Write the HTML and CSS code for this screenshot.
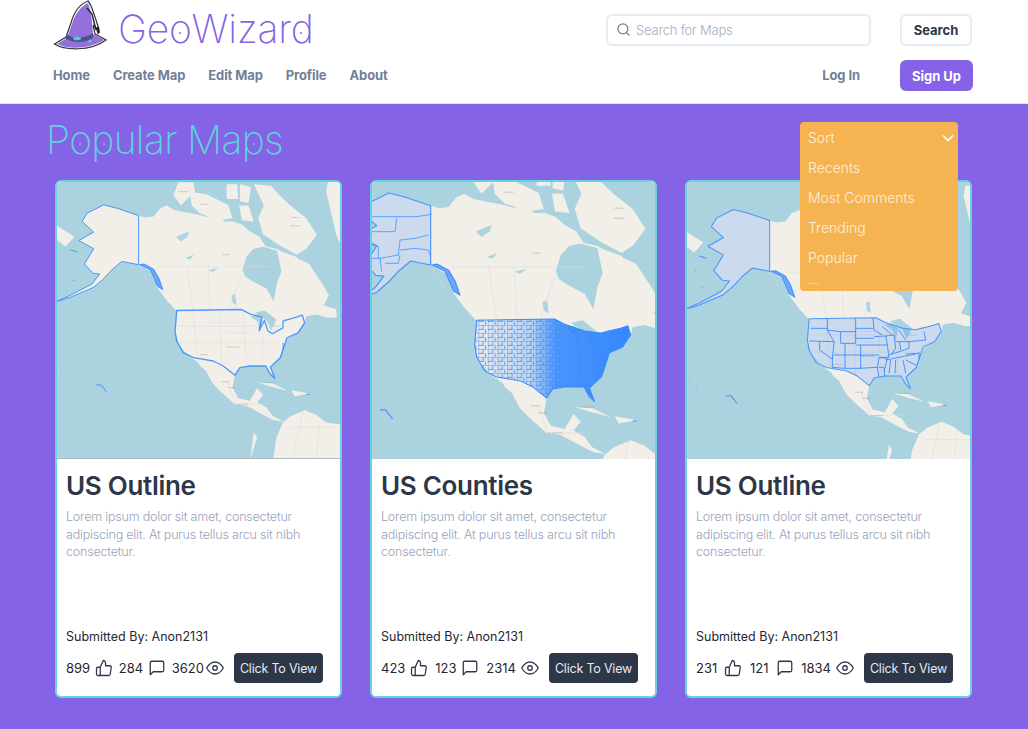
FILE: index.html
```html
<!DOCTYPE html>
<html lang="en">
<head>
<meta charset="utf-8">
<title>GeoWizard</title>
<link rel="stylesheet" href="styles.css">
</head>
<body>
<svg class="defs" width="0" height="0" aria-hidden="true">
  <defs>
    <g id="land">
      <path class="ground" d="M265 122 285 128 310 125 330 100 350 92 372 105 405 112 440 118 470 126 500 125 525 140 550 140 578 150 600 170 628 185 648 215 680 222 700 232 745 248 775 262 800 300 820 330 838 362 822 392 860 405 862 428 835 430 800 420 770 425 765 445 745 475 715 490 700 520 690 550 662 578 675 612 662 600 648 575 600 575 570 580 555 603 548 640 565 672 600 680 622 642 640 662 622 684 650 700 668 725 702 742 672 738 640 722 590 695 555 690 510 650 470 610 445 565 410 540 385 510 375 470 380 410 352 380 322 340 300 290 265 270 215 260 185 285 160 312 130 338 60 368 20 380 60 362 125 328 148 298 128 296 102 268 130 222 85 197 130 172 95 140 110 115 160 90 200 100Z"/>
      <path class="water" d="M578 285 590 245 612 222 640 216 682 228 695 290 682 325 672 380 650 342 612 322 585 305ZM445 570 480 632 500 650 468 590ZM740 240 800 265 790 272 745 252Z"/>
      <path class="water" d="M378 186 418 170 412 186 392 200ZM405 250 432 240 420 254ZM475 286 505 280 488 292ZM545 362 556 358 560 392 548 384ZM600 425 625 422 640 438 630 474 624 442ZM615 415 645 408 680 436 664 468 652 440Z"/>
      <path class="ground" d="M370 60 385 22 430 22 435 50 392 92ZM420 50 470 58 535 90 548 130 510 136 450 116 425 92ZM530 28 562 28 565 72 530 72ZM570 28 604 36 596 84 570 78ZM568 92 596 92 612 140 576 136ZM612 28 664 32 690 62 722 92 770 130 802 180 770 222 742 240 690 212 640 178 625 130 642 92ZM835 20 880 20 880 225 860 180 830 50ZM15 150 72 186 45 215 15 192ZM670 860 680 790 700 745 722 726 765 708 800 722 830 745 880 752 880 860ZM625 625 670 628 715 650 668 638ZM725 648 780 658 735 666ZM800 390 858 404 850 412 805 405ZM600 860 612 775 622 790Z"/>
      <path class="lines" d="M265 270 300 330M320 275H660M410 275 430 405M475 275 480 405M540 400 575 300M530 475H600M430 405 440 545M470 445H580M510 405 515 575M580 410 590 570M640 480 635 575M530 620 560 690M570 690H650M720 760H860M760 710 730 850M810 750 800 850M380 455H640M380 505H690"/>
      <path class="tiny" d="M385 50h30M450 88h24M725 128h24M723 153h26M520 240h20M530 518h38M450 541h24M705 435h14M670 455h22M515 622h22M535 640h24M560 690h36M640 625h34"/>
    </g>
    <path id="us" d="M380 408 575 405 600 418 636 428 628 468 644 438 655 470 668 478 700 460 700 440 740 428 758 422 765 445 745 475 712 490 702 520 692 550 662 578 675 612 662 600 648 575 600 575 570 580 555 603 520 575 490 560 430 550 400 535 380 500 375 470Z"/>
    <path id="us-solid" d="M380 408 575 405 600 418 650 435 690 440 740 428 758 422 765 445 745 475 712 490 702 520 692 550 662 578 675 612 662 600 648 575 600 575 570 580 555 603 520 575 490 560 430 550 400 535 380 500 375 470Z"/>
    <path id="ak" d="M95 140 110 115 160 90 200 100 265 122 265 270 215 260 185 285 160 312 130 338 60 368 20 380 60 362 125 328 148 298 128 296 102 268 130 222 85 197 130 172Z"/>
    <path id="pan" d="M268 270 300 285 322 335 338 345 326 310 310 283 282 268Z"/>
    <path id="isles" d="M60 225 80 232M48 268h3M70 316v3M30 590h2M50 605h2M138 632h14L170 655M700 505V525M770 660H780"/>
    <pattern id="county" width="24" height="20" patternUnits="userSpaceOnUse">
      <path class="county-cell" d="M0 0H24M0 0V20M12 0V11M0 11H14M18 11V20"/>
    </pattern>
    <linearGradient id="fade" x1="0" x2="1" y1="0" y2="0">
      <stop offset="0" stop-color="#3388ff" stop-opacity=".06"/>
      <stop offset=".35" stop-color="#3388ff" stop-opacity=".25"/>
      <stop offset=".52" stop-color="#3388ff" stop-opacity=".85"/>
      <stop offset="1" stop-color="#3388ff"/>
    </linearGradient>
  </defs>
</svg>

<header class="site-header">
  <div class="top-row">
    <a class="brand" href="#">
      <svg class="hat" viewBox="53 0 54 52">
        <path class="hat-edge" d="M88 1C80 4 74 12 71 23L66 37 54.500 44C64 50 90 52 106 40L95 34 93 25 97 30 98 33 99 29 94 14C92 8 90 3 88 1Z"/>
        <path class="hat-body" d="M88 3C81 6 75 14 72 24L67 38 57 44C67 49 88 50 104 40L93 34 92 22C91 14 90 8 88 3Z"/>
        <path class="hat-fold" d="M87 8 92 14 94 22 96 30" />
        <path class="hat-band" d="M66 34C73 39 85 39 93 33L93 38C85 43 74 43 66 39Z"/>
        <ellipse class="hat-gem" cx="77" cy="38.500" rx="4" ry="1.800"/>
        <circle class="hat-gem" cx="90" cy="41" r="1.600"/>
        <path class="hat-tassel" d="M97 27 99 33"/>
      </svg>
      <span class="wordmark">Ge<span class="dot">o</span>Wizar<span class="dot dot-d">d</span></span>
    </a>
    <div class="search-area">
      <label class="search-box">
        <svg class="search-icon" viewBox="0 0 24 24"><circle cx="11" cy="11" r="8"/><path d="M21 21l-4.300-4.300"/></svg>
        <span class="placeholder">Search for Maps</span>
      </label>
      <button class="btn btn-search">Search</button>
    </div>
  </div>
  <div class="nav-row">
    <nav class="nav">
      <a href="#">Home</a><a href="#">Create Map</a><a href="#">Edit Map</a><a href="#">Profile</a><a href="#">About</a>
    </nav>
    <div class="auth">
      <a class="login" href="#">Log In</a>
      <button class="btn btn-signup">Sign Up</button>
    </div>
  </div>
</header>

<main class="content">
  <h1 class="page-title">P<span class="dot">o</span><span class="dot dot-p">p</span>ular Ma<span class="dot dot-p">p</span>s</h1>

  <div class="sort-menu">
    <div class="sort-item sort-head">Sort
      <svg class="chevron" viewBox="0 0 12 8"><path d="M1 1.500 6 6.500 11 1.500"/></svg>
    </div>
    <div class="sort-item">Recents</div>
    <div class="sort-item">Most Comments</div>
    <div class="sort-item">Trending</div>
    <div class="sort-item">Popular</div>
    <div class="sort-more">....</div>
  </div>

  <section class="cards">
    <article class="card">
      <svg class="map map-rule" viewBox="21 21 849 831">
        <use href="#land"/>
        <use class="outline coast" href="#us"/>
        <use class="outline" href="#ak"/>
        <use class="outline dense" href="#pan"/>
        <use class="outline" href="#isles"/>
      </svg>
      <div class="card-body">
        <h2 class="card-title">US Outline</h2>
        <p class="card-text">Lorem ipsum dolor sit amet, consectetur adipiscing elit. At purus tellus arcu sit nibh consectetur.</p>
        <p class="submitted">Submitted By: Anon2131</p>
        <div class="card-foot">
          <div class="stats">
            <span class="stat">899 <svg class="icon" viewBox="0 0 24 24"><path d="M14 9V5a3 3 0 0 0-3-3l-4 9v11h11.280a2 2 0 0 0 2-1.700l1.380-9a2 2 0 0 0-2-2.300zM7 22H4a2 2 0 0 1-2-2v-7a2 2 0 0 1 2-2h3"/></svg></span>
            <span class="stat">284 <svg class="icon" viewBox="0 0 24 24"><path d="M21 15a2 2 0 0 1-2 2H7l-4 4V5a2 2 0 0 1 2-2h14a2 2 0 0 1 2 2z"/></svg></span>
            <span class="stat stat-tight">3620 <svg class="icon icon-eye" viewBox="0 0 24 24"><path d="M1 12s4-8 11-8 11 8 11 8-4 8-11 8-11-8-11-8z"/><circle cx="12" cy="12" r="3"/></svg></span>
          </div>
          <button class="btn-view">Click To View</button>
        </div>
      </div>
    </article>

    <article class="card">
      <svg class="map" viewBox="21 21 849 831">
        <g transform="translate(-121 -54) scale(1.2)">
          <use href="#land"/>
          <use class="county-fill" href="#us-solid"/>
          <use class="county-fade" href="#us-solid"/>
          <use class="outline filled" href="#ak"/>
          <use class="outline dense" href="#pan"/>
          <use class="outline" href="#isles"/>
        </g>
        <path class="outline thin" d="M20 125H155L200 118M20 170H90L95 130M20 210 40 215 40 250M45 250 100 240 105 195 150 190 190 180M105 225 150 220 190 225 197 245M20 250H45M45 250 50 290M60 265H100M100 265 105 240"/>
      </svg>
      <div class="card-body">
        <h2 class="card-title">US Counties</h2>
        <p class="card-text">Lorem ipsum dolor sit amet, consectetur adipiscing elit. At purus tellus arcu sit nibh consectetur.</p>
        <p class="submitted">Submitted By: Anon2131</p>
        <div class="card-foot">
          <div class="stats">
            <span class="stat">423 <svg class="icon" viewBox="0 0 24 24"><path d="M14 9V5a3 3 0 0 0-3-3l-4 9v11h11.280a2 2 0 0 0 2-1.700l1.380-9a2 2 0 0 0-2-2.300zM7 22H4a2 2 0 0 1-2-2v-7a2 2 0 0 1 2-2h3"/></svg></span>
            <span class="stat">123 <svg class="icon" viewBox="0 0 24 24"><path d="M21 15a2 2 0 0 1-2 2H7l-4 4V5a2 2 0 0 1 2-2h14a2 2 0 0 1 2 2z"/></svg></span>
            <span class="stat">2314 <svg class="icon icon-eye" viewBox="0 0 24 24"><path d="M1 12s4-8 11-8 11 8 11 8-4 8-11 8-11-8-11-8z"/><circle cx="12" cy="12" r="3"/></svg></span>
          </div>
          <button class="btn-view">Click To View</button>
        </div>
      </div>
    </article>

    <article class="card">
      <svg class="map" viewBox="21 21 849 831">
        <g transform="translate(-4 11) scale(1.03)">
          <use href="#land"/>
          <use class="outline filled" href="#us-solid"/>
          <use class="outline filled" href="#ak"/>
          <use class="outline dense" href="#pan"/>
          <use class="outline" href="#isles"/>
        </g>
        <path class="outline" transform="translate(-3 315)" d="M395 145H445M392 183 465 185M445 115V150L465 185V190M445 150 485 155H530M530 115V190M530 145H582M530 175H585M485 155V190H530M422 185V210L460 238 465 190M465 225H498M498 190V265M498 225H545M545 195V265M530 195H585M545 225H600M600 232 595 265M460 225V262L498 265 540 265 595 262 600 290M582 115 585 150 610 165M585 170 620 168 625 195M585 195H625L630 232H600M600 232 625 235 615 275M600 262H615L618 290M635 240 630 280M650 240 648 280M672 240 680 280M620 240 710 222M630 225 690 205M620 168 645 165 650 205 635 225M650 185H662L665 210M662 185H690V205M690 185 740 180M680 222 720 220M680 240 710 255M735 155 740 180M610 140 640 165M660 150 680 180"/>
      </svg>
      <div class="card-body">
        <h2 class="card-title">US Outline</h2>
        <p class="card-text">Lorem ipsum dolor sit amet, consectetur adipiscing elit. At purus tellus arcu sit nibh consectetur.</p>
        <p class="submitted">Submitted By: Anon2131</p>
        <div class="card-foot">
          <div class="stats">
            <span class="stat stat-wide">231 <svg class="icon" viewBox="0 0 24 24"><path d="M14 9V5a3 3 0 0 0-3-3l-4 9v11h11.280a2 2 0 0 0 2-1.700l1.380-9a2 2 0 0 0-2-2.300zM7 22H4a2 2 0 0 1-2-2v-7a2 2 0 0 1 2-2h3"/></svg></span>
            <span class="stat stat-wide">121 <svg class="icon" viewBox="0 0 24 24"><path d="M21 15a2 2 0 0 1-2 2H7l-4 4V5a2 2 0 0 1 2-2h14a2 2 0 0 1 2 2z"/></svg></span>
            <span class="stat">1834 <svg class="icon icon-eye" viewBox="0 0 24 24"><path d="M1 12s4-8 11-8 11 8 11 8-4 8-11 8-11-8-11-8z"/><circle cx="12" cy="12" r="3"/></svg></span>
          </div>
          <button class="btn-view">Click To View</button>
        </div>
      </div>
    </article>
  </section>
</main>
</body>
</html>
```
FILE: styles.css
```css
* { box-sizing: border-box; }
html, body { margin: 0; height: 100%; }
body {
  display: flex;
  flex-direction: column;
  font-family: Inter, "Liberation Sans", sans-serif;
  background: #8463e6;
  color: #2d3748;
  overflow: hidden;
}
a { text-decoration: none; color: inherit; }
.defs { position: absolute; }

/* header */
.site-header {
  height: 104px;
  flex: none;
  background: #fff;
  padding: 0 56px 0 53px;
  border-bottom: 1px solid #e4dcfa;
}
.top-row { display: flex; justify-content: space-between; height: 60px; }
.brand { display: flex; align-items: flex-start; gap: 11px; }
.hat { width: 54px; height: 52px; }
.hat-edge { fill: #fff; stroke: #333; stroke-width: 1.200; }
.hat-body { fill: #9370dc; }
.hat-fold { fill: none; stroke: #2a2438; stroke-width: 1.500; }
.hat-band { fill: #50508c; }
.hat-gem { fill: #45d3d8; }
.hat-tassel { stroke: #222; stroke-width: 2.500; }
.wordmark {
  font-size: 39px;
  font-weight: 200;
  line-height: 58px;
  color: #8463e6;
  letter-spacing: -.2px;
}
.dot { position: relative; }
.dot::after {
  content: "";
  position: absolute;
  left: 50%;
  top: 58%;
  width: 2px;
  height: 2px;
  margin-left: -1px;
  border-radius: 50%;
  background: currentColor;
}
.dot-d::after { left: 43%; }
.dot-p::after { left: 55%; }
.search-area { display: flex; gap: 29px; padding-top: 14px; height: 46px; }
.search-box {
  width: 265px;
  height: 32px;
  display: flex;
  align-items: center;
  gap: 5px;
  padding: 0 8px 1px;
  border: 2px solid #e8ebf2;
  border-radius: 6px;
}
.search-icon { width: 15px; height: 15px; fill: none; stroke: #718096; stroke-width: 2; stroke-linecap: round; }
.placeholder { font-size: 13px; font-weight: 300; color: #a0aec0; letter-spacing: -.2px; }
.btn { font-family: inherit; font-weight: 700; font-size: 13px; border-radius: 6px; }
.btn-search {
  width: 72px;
  height: 32px;
  padding: 0 0 1px;
  background: #fff;
  border: 2px solid #e8ebf2;
  color: #2d3748;
}
.nav-row { display: flex; justify-content: space-between; align-items: center; height: 31px; }
.nav { display: flex; gap: 23px; font-size: 13px; font-weight: 700; color: #718096; letter-spacing: -.1px; padding-bottom: 1px; }
.auth { display: flex; align-items: center; gap: 40px; }
.login { font-size: 13px; font-weight: 700; color: #718096; letter-spacing: -.1px; padding-bottom: 1px; }
.btn-signup {
  width: 73px;
  height: 31px;
  padding: 0;
  margin-right: -1px;
  background: #8463e6;
  border: 0;
  color: #fff;
}

/* content */
.content { position: relative; flex: 1; padding: 0 56px 0 55px; }
.page-title {
  margin: 0 0 0 -9px;
  height: 76px;
  font-size: 39px;
  font-weight: 200;
  line-height: 72px;
  letter-spacing: -.7px;
  color: #5fd3da;
}
.sort-menu {
  position: absolute;
  z-index: 2;
  left: 800px;
  top: 18px;
  width: 158px;
  height: 169px;
  padding: 1px 8px 0;
  background: #f5b451;
  border-radius: 4px;
  color: rgba(255, 255, 255, .82);
  font-size: 14px;
  font-weight: 300;
}
.sort-item { height: 30px; line-height: 30px; }
.sort-head { display: flex; justify-content: space-between; align-items: center; }
.chevron { width: 12px; height: 8px; margin-right: -4px; fill: none; stroke: #fff; stroke-width: 1.600; }
.sort-more { font-size: 10px; line-height: 12px; font-weight: 400; margin-top: 1px; }

.cards { display: grid; grid-template-columns: repeat(3, 287px); gap: 28px; }
.card {
  height: 518px;
  display: flex;
  flex-direction: column;
  background: #fff;
  border: 2px solid #69d2da;
  border-radius: 6px;
  overflow: hidden;
}
.map {
  display: block;
  width: 283px;
  height: 277px;
  flex: none;
  background: #aad3df;
  filter: blur(.4px);
}
.map-rule { border-bottom: 1px solid #b4b8bc; }
.ground { fill: #f2efe9; }
.water { fill: #aad3df; }
.lines { fill: none; stroke: #dcd8dc; stroke-width: 1.500; }
.tiny { fill: none; stroke: #8f8a92; stroke-width: 2; stroke-dasharray: 2 2; }
.outline { fill: none; stroke: #3388ff; stroke-width: 3; stroke-linejoin: round; stroke-opacity: .85; }
.outline.coast { stroke-width: 4; }
.outline.filled { fill: #3388ff; fill-opacity: .2; }
.outline.thin { stroke-width: 2.500; }
.outline.dense { fill: #3388ff; fill-opacity: .7; }
.county-fill { fill: url(#county); stroke: #3388ff; stroke-width: 2.500; }
.county-cell { fill: none; stroke: #3388ff; stroke-width: 1.800; }
.county-fade { fill: url(#fade); }

.card-body {
  flex: 1;
  display: flex;
  flex-direction: column;
  padding: 8px 17px 13px 9px;
}
.card-title {
  margin: 0;
  font-size: 26px;
  font-weight: 600;
  line-height: 38px;
  letter-spacing: -.3px;
  color: #2d3748;
}
.card-text {
  margin: 3px 0 0;
  font-size: 12.500px;
  font-weight: 300;
  line-height: 17.500px;
  letter-spacing: -.2px;
  color: #98a3ba;
}
.submitted {
  margin: auto 0 7px;
  font-size: 12.500px;
  line-height: 18px;
  color: #1f2733;
}
.card-foot { display: flex; align-items: center; justify-content: space-between; height: 30px; }
.stats {
  width: 158px;
  display: flex;
  justify-content: space-between;
  align-items: center;
  font-size: 13px;
  color: #1f2733;
}
.stat { display: flex; align-items: center; gap: 5px; white-space: nowrap; }
.stat-tight { gap: 2px; }
.stat-wide { gap: 7px; }
.icon {
  width: 18px;
  height: 18px;
  fill: none;
  stroke: #2d3748;
  stroke-width: 1.700;
  stroke-linecap: round;
  stroke-linejoin: round;
}
.btn-view {
  width: 89px;
  height: 30px;
  padding: 0;
  border: 0;
  border-radius: 4px;
  background: #2d3748;
  color: #e6e9ef;
  font-family: inherit;
  font-size: 12.500px;
  letter-spacing: -.2px;
}
```
